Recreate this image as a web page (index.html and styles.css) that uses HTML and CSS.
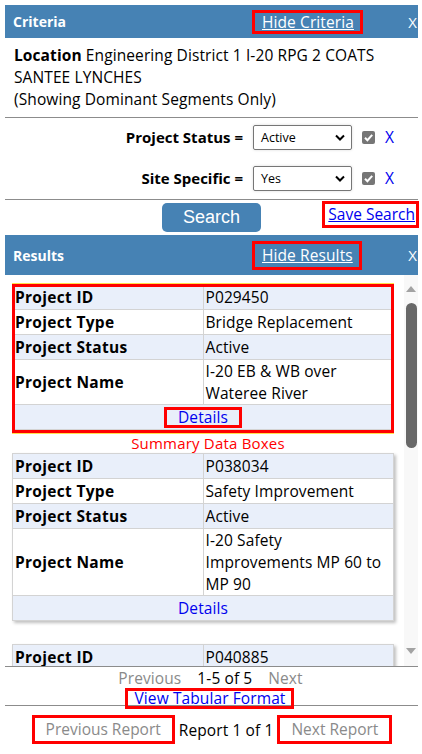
FILE: index.html
```html
<!DOCTYPE html>
<html>
<head>
<meta charset="utf-8">
<title>Criteria and Results</title>
<link rel="stylesheet" href="styles.css">
</head>
<body>
<div class="page">
  <div class="bar">
    <span class="bar-title">Criteria</span>
    <span class="mark bar-mark"><a href="#" class="bar-link">Hide Criteria</a></span>
    <span class="bar-x">X</span>
  </div>
  <div class="location"><b>Location</b> Engineering District 1 I-20 RPG 2 COATS<br>SANTEE LYNCHES<br>(Showing Dominant Segments Only)</div>
  <div class="filters">
    <div class="filter">
      <span class="filter-label">Project Status =</span>
      <span class="select">Active<svg class="chev" width="10" height="7" viewBox="0 0 10 7"><path d="M1 1.5 L5 5.5 L9 1.5" fill="none" stroke="#000" stroke-width="2"/></svg></span>
      <span class="check"><svg width="13" height="13" viewBox="0 0 13 13"><rect width="13" height="13" rx="2" fill="#767676"/><path d="M3 6.8 L5.4 9.2 L10.2 3.8" fill="none" stroke="#fff" stroke-width="2"/></svg></span>
      <a href="#" class="clear">X</a>
    </div>
    <div class="filter">
      <span class="filter-label">Site Specific =</span>
      <span class="select">Yes<svg class="chev" width="10" height="7" viewBox="0 0 10 7"><path d="M1 1.5 L5 5.5 L9 1.5" fill="none" stroke="#000" stroke-width="2"/></svg></span>
      <span class="check"><svg width="13" height="13" viewBox="0 0 13 13"><rect width="13" height="13" rx="2" fill="#767676"/><path d="M3 6.8 L5.4 9.2 L10.2 3.8" fill="none" stroke="#fff" stroke-width="2"/></svg></span>
      <a href="#" class="clear">X</a>
    </div>
  </div>
  <div class="search-row">
    <span></span>
    <button class="search-btn">Search</button>
    <span class="mark save-mark"><a href="#" class="link">Save Search</a></span>
  </div>
  <div class="bar results-bar">
    <span class="bar-title">Results</span>
    <span class="mark bar-mark"><a href="#" class="bar-link">Hide Results</a></span>
    <span class="bar-x">X</span>
  </div>
  <div class="results">
    <div class="results-list">
      <div class="card card-marked">
        <table class="data">
          <tr class="alt"><th>Project ID</th><td>P029450</td></tr>
          <tr><th>Project Type</th><td>Bridge Replacement</td></tr>
          <tr class="alt"><th>Project Status</th><td>Active</td></tr>
          <tr><th>Project Name</th><td>I-20 EB &amp; WB over<br>Wateree River</td></tr>
          <tr class="alt"><td colspan="2" class="details"><span class="mark details-mark"><a href="#" class="link-plain">Details</a></span></td></tr>
        </table>
      </div>
      <div class="note">Summary Data Boxes</div>
      <div class="card card-shadow">
        <table class="data">
          <tr class="alt"><th>Project ID</th><td>P038034</td></tr>
          <tr><th>Project Type</th><td>Safety Improvement</td></tr>
          <tr class="alt"><th>Project Status</th><td>Active</td></tr>
          <tr><th>Project Name</th><td>I-20 Safety<br>Improvements MP 60 to<br>MP 90</td></tr>
          <tr class="alt"><td colspan="2" class="details"><a href="#" class="link-plain">Details</a></td></tr>
        </table>
      </div>
      <div class="card card-shadow">
        <table class="data">
          <tr class="alt"><th>Project ID</th><td>P040885</td></tr>
        </table>
      </div>
    </div>
    <div class="scrollbar">
      <svg class="arrow" width="12" height="9" viewBox="0 0 12 9"><path d="M1 8 L6 2 L11 8 Z" fill="#a3a3a3"/></svg>
      <span class="thumb"></span>
      <span class="track-fill"></span>
      <svg class="arrow" width="12" height="9" viewBox="0 0 12 9"><path d="M1 1 L6 7 L11 1 Z" fill="#a3a3a3"/></svg>
    </div>
  </div>
  <div class="pager">
    <span class="muted">Previous</span>
    <span>1-5 of 5</span>
    <span class="muted">Next</span>
  </div>
  <div class="tabular"><span class="mark tab-mark"><a href="#" class="link-plain">View Tabular Format</a></span></div>
  <div class="report-nav">
    <span class="mark report-btn">Previous Report</span>
    <span class="report-count">Report 1 of 1</span>
    <span class="mark report-btn">Next Report</span>
  </div>
</div>
</body>
</html>
```

FILE: styles.css
```css
* { box-sizing: border-box; }
html, body { margin: 0; padding: 0; background: #fff; }
body {
  font-family: "Open Sans", "Noto Sans", sans-serif;
  font-size: 15.5px;
  letter-spacing: 0.1px;
  color: #000;
}
.page { width: 413px; margin: 5px 0 0 5px; }

.mark { border: 3px solid #f00; display: inline-block; }

.bar {
  display: grid;
  grid-template-columns: 247px auto 1fr;
  align-items: center;
  background: #4682b4;
  color: #fff;
  height: 33px;
}
.bar-title { font-weight: bold; font-size: 14px; letter-spacing: 0; padding-left: 8px; }
.bar-mark { padding: 0 6px 0 7px; line-height: 18px; }
.bar-link { color: #fff; text-decoration: underline; font-size: 15.5px; }
.bar-x { justify-self: end; padding-right: 1px; font-size: 15px; }
.results-bar { height: 40px; }
.results-bar .bar-mark { line-height: 23px; }

.location {
  padding: 6px 9px 7px;
  line-height: 22px;
  border-bottom: 1px solid #8c8c8c;
}

.filters {
  padding: 6px 0 8px;
  display: flex;
  flex-direction: column;
  gap: 15px;
  border-bottom: 1px solid #8c8c8c;
}
.filter {
  display: grid;
  grid-template-columns: 238px 99px 13px auto;
  column-gap: 10px;
  align-items: center;
  height: 26px;
}
.filter-label { text-align: right; font-weight: bold; font-size: 15px; letter-spacing: 0; }
.select {
  display: flex;
  align-items: center;
  justify-content: space-between;
  height: 25px;
  border: 1px solid #767676;
  border-radius: 2px;
  padding: 0 6px 0 7px;
  font-size: 12.5px;
  letter-spacing: 0;
  box-shadow: 0 0 3px rgba(0,0,0,0.15);
}
.chev { display: block; }
.check { display: flex; }
.clear { color: #0000ee; text-decoration: none; font-size: 15.5px; }

.search-row {
  display: grid;
  grid-template-columns: 1fr 99px 1fr;
  align-items: start;
  height: 35px;
  padding-top: 3px;
}
.search-btn {
  height: 29px;
  border: none;
  border-radius: 5px;
  background: #4682b4;
  color: #fff;
  font-family: "Liberation Sans", Arial, sans-serif;
  font-size: 18px;
  letter-spacing: 0;
  padding: 0;
}
.save-mark { justify-self: end; padding: 0 1px 0 3px; line-height: 21px; margin-top: -2px; margin-right: -1px; letter-spacing: 0; }
.link { color: #0000ee; text-decoration: underline; }
.link-plain { color: #0000ee; text-decoration: none; }

.results {
  display: flex;
  height: 392px;
  border-bottom: 1px solid #8c8c8c;
}
.results-list {
  width: 399px;
  padding: 9px 0 0 7px;
  overflow: hidden;
}
.card { width: 382px; }
.card-marked { position: relative; }
.card-marked::after {
  content: "";
  position: absolute;
  left: 0; right: 0; top: 0; bottom: -3px;
  border: 3px solid #f00;
  box-shadow: 0 -1px 0 #ffe14d, 0 1px 0 #ffe14d;
  pointer-events: none;
}
.card-shadow { box-shadow: 2px 2px 3px rgba(0,0,0,0.25); margin-bottom: 23px; }

.data {
  width: 100%;
  border-collapse: collapse;
  table-layout: fixed;
  border: 1px solid #d3d3d3;
}
.data th, .data td {
  border: 1px solid #d3d3d3;
  height: 25px;
  line-height: 22px;
  padding: 0 2px;
  text-align: left;
  vertical-align: middle;
}
.data th { font-weight: bold; width: 50%; letter-spacing: 0.3px; }
.data tr.alt { background: #e9effa; }
.data td.details { text-align: center; }
.details-mark { padding: 0 11px; line-height: 15px; }

.note {
  color: #f00;
  text-align: center;
  line-height: 20px;
  padding-top: 3px;
  height: 23px;
  font-size: 15px;
  letter-spacing: 0.2px;
}

.scrollbar {
  width: 14px;
  background: #f8f8f8;
  display: flex;
  flex-direction: column;
  align-items: center;
  padding: 9px 0 10px;
}
.arrow { display: block; flex: none; }
.thumb {
  width: 11px;
  height: 145px;
  margin-top: 10px;
  background: #686868;
  border-radius: 6px;
}
.track-fill { flex: 1; }

.pager {
  display: flex;
  justify-content: center;
  gap: 16px;
  line-height: 20px;
  padding-top: 1px;
  padding-right: 2px;
}
.muted { color: #8a8a8a; }

.tabular {
  text-align: center;
  height: 18px;
  padding-right: 4px;
  border-bottom: 1px solid #8c8c8c;
}
.tab-mark { padding: 0 6px 0 7px; line-height: 15px; position: relative; top: -1px; }

.report-nav {
  display: flex;
  justify-content: center;
  align-items: center;
  gap: 4px;
  padding-top: 9px;
  padding-left: 1px;
}
.report-btn { color: #8a8a8a; line-height: 23px; padding: 0 11px; letter-spacing: 0; }
.report-count { color: #000; }
```
